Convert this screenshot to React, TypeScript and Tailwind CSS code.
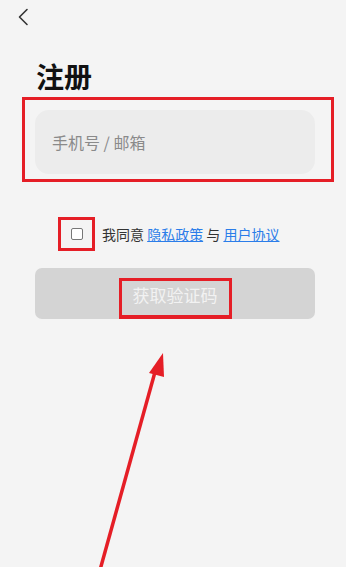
import React from "react"

const font = { fontFamily: '"Noto Sans CJK SC", "Noto Sans", sans-serif' }

export default function App() {
  return (
    <div className="relative h-[567px] w-full overflow-hidden bg-[#f4f4f4]" style={font}>
      {/* back */}
      <div className="pl-[17px] pt-[8px]">
        <svg width="12" height="18" viewBox="0 0 12 18" fill="none">
          <path d="M10 1.5 L2.5 9 L10 16.5" stroke="#333" strokeWidth="1.6" strokeLinecap="round" strokeLinejoin="round" />
        </svg>
      </div>

      <h1 className="ml-[36px] mt-[31px] text-[28px] font-bold leading-[38px] text-[#111]">注册</h1>

      {/* phone / email field */}
      <div className="ml-[22px] mr-[12px] mt-[2px] border-[3px] border-[#e51e26] pb-[5px] pl-[10px] pr-[16px] pt-[10px]">
        <div className="flex h-[64px] items-center rounded-[14px] bg-[#ececec] pl-[17px] text-[16px] text-[#8a8a8a]">
          手机号 / 邮箱
        </div>
      </div>

      {/* agreement */}
      <div className="mt-[35px] flex items-center pl-[58px]">
        <div className="flex h-[34px] w-[37px] items-center justify-center border-[3px] border-[#e51e26]">
          <div className="h-[12px] w-[12px] rounded-[2px] border border-[#777] bg-white"></div>
        </div>
        <div className="ml-[7px] text-[14px] text-[#333]">
          我同意 <span className="text-[#2b7de9] underline">隐私政策</span> 与{" "}
          <span className="text-[#2b7de9] underline">用户协议</span>
        </div>
      </div>

      {/* submit */}
      <div className="ml-[35px] mr-[31px] mt-[17px] flex h-[51px] items-start justify-center rounded-[7px] bg-[#d4d4d4] pt-[10px]">
        <div className="flex h-[41px] w-[113px] items-center justify-center border-[3px] border-b-[4px] border-[#e51e26] pb-[6px] text-[17px] text-[#f2f2f2]">
          获取验证码
        </div>
      </div>

      {/* annotation arrow */}
      <svg className="absolute left-0 top-0" width="346" height="567" viewBox="0 0 346 567">
        <line x1="100" y1="570" x2="155" y2="372" stroke="#e51e26" strokeWidth="3.5" />
        <polygon points="163,353 149,373 164,377" fill="#e51e26" />
      </svg>
    </div>
  )
}
